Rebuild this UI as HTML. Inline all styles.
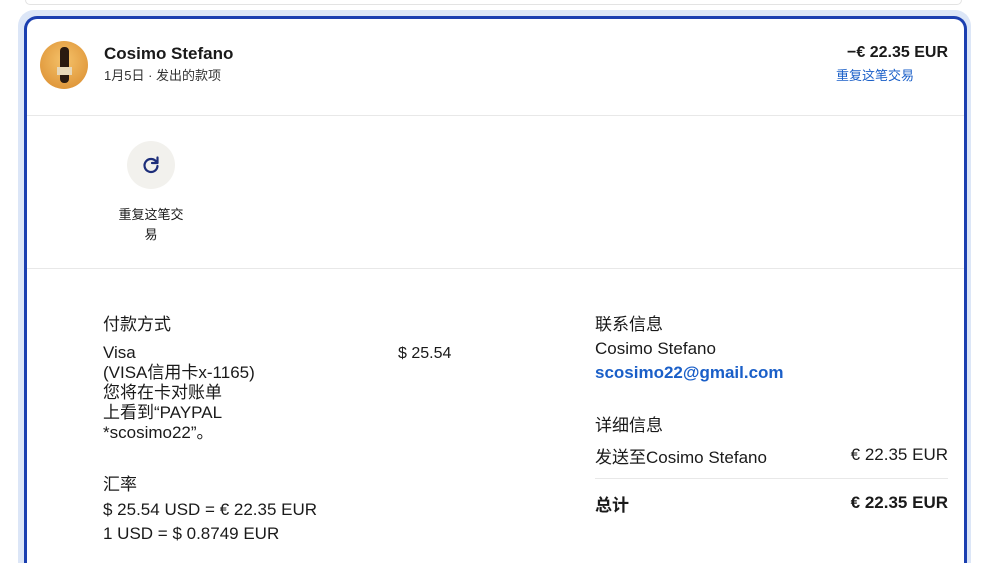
<!DOCTYPE html>
<html style="width:997px;height:563px;overflow:hidden"><head><meta charset="utf-8"><style>
*{margin:0;padding:0;box-sizing:border-box}
body{width:997px;height:563px;overflow:hidden;background:#fff;font-family:"Liberation Sans","Noto Sans CJK SC",sans-serif;color:#1a1a1a;position:relative}
.prev{position:absolute;left:25px;top:0;width:937px;height:5px;border:1px solid #e3e3e3;border-top:0;border-radius:0 0 10px 10px}
.glow{position:absolute;left:18px;top:10px;width:953px;height:553px;border-radius:16px 16px 0 0;background:#dce6f7}
.card{position:absolute;left:24px;top:16px;width:943px;height:547px;border:3px solid #1b3fb0;border-bottom:0;border-radius:13px 13px 0 0;background:#fff}
.abs{position:absolute}
.hr{position:absolute;left:0;right:0;height:1px;background:#e8e8e8}
</style></head><body>
<div class="prev"></div>
<div class="glow"></div>
<div class="card">
  <div class="abs" style="left:13px;top:22px;width:48px;height:48px;border-radius:50%;background:radial-gradient(circle at 50% 40%,#f5c26a,#d98a2c);overflow:hidden">
    <div class="abs" style="left:20px;top:6px;width:9px;height:36px;background:#2a1a10;border-radius:4px"></div>
    <div class="abs" style="left:17px;top:26px;width:15px;height:8px;background:#e8d8b8"></div>
  </div>
  <div class="abs" style="left:77px;top:25px;font-size:17px;font-weight:bold">Cosimo Stefano</div>
  <div class="abs" style="left:77px;top:46px;font-size:13px;color:#333">1月5日 · 发出的款项</div>
  <div class="abs" style="right:16px;top:25px;font-size:16px;font-weight:bold">−€ 22.35 EUR</div>
  <div class="abs" style="left:809px;top:46px;font-size:13px;color:#1a5fc8">重复这笔交易</div>
  <div class="hr" style="top:96px"></div>
  <div class="abs" style="left:100px;top:122px;width:48px;height:48px;border-radius:50%;background:#f2f1ed"></div>
  <svg class="abs" style="left:113px;top:135px" width="22" height="22" viewBox="0 0 22 22"><path d="M16.5 8 A6.5 6.5 0 1 0 17.5 12" fill="none" stroke="#1d2e7a" stroke-width="2.2" stroke-linecap="round"/><path d="M17.5 3.5 L17.5 9 L12 9" fill="none" stroke="#1d2e7a" stroke-width="2.2" stroke-linecap="round" stroke-linejoin="round"/></svg>
  <div class="abs" style="left:87px;top:186px;width:74px;text-align:center;font-size:13px;line-height:20px">重复这笔交易</div>
  <div class="hr" style="top:249px"></div>
  <div class="abs" style="left:76px;top:291px;font-size:17px">付款方式</div>
  <div class="abs" style="left:76px;top:324px;font-size:17px;line-height:20px">Visa<br>(VISA信用卡x-1165)<br>您将在卡对账单<br>上看到“PAYPAL<br>*scosimo22”。</div>
  <div class="abs" style="left:371px;top:326px;font-size:16px">$ 25.54</div>
  <div class="abs" style="left:76px;top:451px;font-size:17px">汇率</div>
  <div class="abs" style="left:76px;top:479px;font-size:17px;line-height:24px">$ 25.54 USD = € 22.35 EUR<br>1 USD = $ 0.8749 EUR</div>
  <div class="abs" style="left:568px;top:291px;font-size:17px">联系信息</div>
  <div class="abs" style="left:568px;top:320px;font-size:17px">Cosimo Stefano</div>
  <div class="abs" style="left:568px;top:344px;font-size:17px;font-weight:bold;color:#1a5fc8">scosimo22@gmail.com</div>
  <div class="abs" style="left:568px;top:392px;font-size:17px">详细信息</div>
  <div class="abs" style="left:568px;top:424px;font-size:17px">发送至Cosimo Stefano</div>
  <div class="abs" style="right:16px;top:426px;font-size:17px">€ 22.35 EUR</div>
  <div class="abs" style="left:568px;width:353px;top:459px;height:1px;background:#e8e8e8"></div>
  <div class="abs" style="left:568px;top:472px;font-size:17px;font-weight:bold">总计</div>
  <div class="abs" style="right:16px;top:474px;font-size:17px;font-weight:bold">€ 22.35 EUR</div>
</div>
</body></html>
